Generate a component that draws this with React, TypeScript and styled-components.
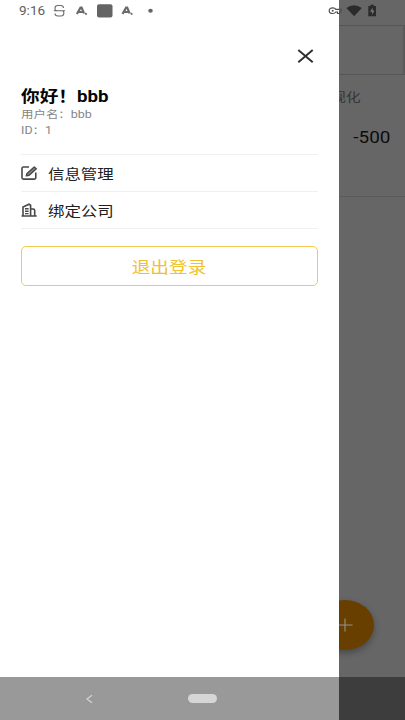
import React from 'react';
import styled, { createGlobalStyle } from 'styled-components';

const Global = createGlobalStyle`
  * { box-sizing: border-box; }
  body { margin: 0; background: #666; overflow: hidden; font-family: Roboto, "Noto Sans CJK SC", sans-serif; }
`;

const Screen = styled.div`
  position: relative;
  width: 405px;
  height: 720px;
  overflow: hidden;
  background: #666;
`;

const Wide = styled.span<{ $origin?: string; $x?: number }>`
  display: inline-block;
  white-space: nowrap;
  transform: scaleX(${p => p.$x ?? 1.165});
  transform-origin: ${p => p.$origin ?? 'left'} center;
`;

/* Dimmed page behind the drawer */
const Page = styled.div`
  display: flex;
  flex-direction: column;
  height: 720px;
  padding-top: 25px;
  background: #666;
`;
const PageBox = styled.div`
  height: 50px;
  border: 1px solid #565656;
  border-right: 2px solid #595959;
`;
const PageCard = styled.div`
  display: flex;
  flex-direction: column;
  align-items: flex-end;
  height: 122px;
  border-bottom: 1px solid #5a5a5a;
`;
const PageTab = styled.div`
  margin: 13px 44px 0 0;
  font-size: 12.5px;
  line-height: 20px;
  color: #343434;
`;
const Amount = styled.div`
  margin: 20px 15px 0 0;
  font-size: 16px;
  line-height: 20px;
  color: #0c0c0c;
`;
const Fab = styled.div`
  position: absolute;
  left: 316px;
  top: 600px;
  width: 58px;
  height: 50px;
  border-radius: 50%;
  background: #693f00;
  box-shadow: 0 3px 7px rgba(0, 0, 0, 0.3);
  display: grid;
  place-items: center;
`;

/* Drawer */
const Drawer = styled.aside`
  position: absolute;
  inset: 0 auto 0 0;
  width: 339px;
  background: #fff;
  padding: 47px 21px 0 20.5px;
  display: flex;
  flex-direction: column;
`;
const CloseRow = styled.div`
  display: flex;
  justify-content: flex-end;
  height: 39px;
  padding-right: 4px;
`;
const Hello = styled.div`
  font-size: 16px;
  font-weight: 700;
  line-height: 22px;
  height: 21px;
  color: #050505;
`;
const Meta = styled.div`
  font-size: 10.7px;
  line-height: 15.5px;
  height: 15.5px;
  color: #858585;
`;
const Menu = styled.div`
  margin-top: 16px;
  border-top: 1px solid #f0f0f0;
`;
const MenuItem = styled.div`
  display: flex;
  align-items: center;
  height: 36.8px;
  border-bottom: 1px solid #f0f0f0;
  font-size: 14.1px;
  color: #202020;
`;
const IconSlot = styled.span`
  display: flex;
  width: 27px;
`;
const Logout = styled.div`
  display: flex;
  align-items: center;
  justify-content: center;
  height: 40px;
  margin-top: 17.4px;
  border: 1.4px solid #f4cb50;
  border-radius: 5px;
  font-size: 16px;
  color: #efc234;
`;

/* System bars */
const StatusBar = styled.div`
  position: absolute;
  inset: 0 0 auto 0;
  height: 22px;
`;
const StatusLeft = styled.div`
  display: flex;
  align-items: center;
  height: 22px;
  padding-left: 19px;
  color: #606060;
  font-size: 12px;
`;
const Clock = styled.span`
  width: 34px;
`;
const StatusIcons = styled.div`
  position: absolute;
  right: 27px;
  top: 4px;
  display: flex;
`;
const NavBar = styled.div`
  position: absolute;
  inset: auto 0 0 0;
  height: 43px;
  background: rgba(0, 0, 0, 0.4);
  display: flex;
  align-items: center;
  padding-left: 85px;
`;
const HomePill = styled.span`
  width: 29px;
  height: 9px;
  margin-left: 94px;
  border-radius: 5px;
  background: #d6d6d6;
`;

export default function App() {
  return (
    <Screen>
      <Global />
      <Page>
        <PageBox />
        <PageCard>
          <PageTab><Wide $origin="right">可视化</Wide></PageTab>
          <Amount><Wide $origin="right" $x={1.18}>-500</Wide></Amount>
        </PageCard>
      </Page>
      <Fab>
        <svg width="16" height="14" viewBox="0 0 16 14" stroke="#929292" strokeWidth="1.1">
          <path d="M0.5 7H15.5M8 .5V13.5" />
        </svg>
      </Fab>

      <Drawer>
        <CloseRow>
          <svg width="17" height="18" viewBox="0 0 17 18" fill="none" stroke="#2e2e2e" strokeWidth="1.9">
            <path d="M1.3 3L15.7 15.2M15.7 3L1.3 15.2" />
          </svg>
        </CloseRow>
        <Hello><Wide>你好！bbb</Wide></Hello>
        <Meta><Wide>用户名：bbb</Wide></Meta>
        <Meta><Wide>ID：1</Wide></Meta>
        <Menu>
          <MenuItem>
            <IconSlot>
              <svg width="17" height="16" viewBox="0 0 17 16" fill="none" stroke="#484848" strokeWidth="1.6" strokeLinejoin="round">
                <path d="M8 2H2.5Q1 2 1 3.3V12.8Q1 14.1 2.5 14.1H13.3Q14.8 14.1 14.8 12.8V7.6" />
                <path d="M5.3 10.8L6 8.4L13.2 2L15.3 3.8L8.2 10.2Z" fill="#888" strokeWidth="1.4" />
              </svg>
            </IconSlot>
            <Wide>信息管理</Wide>
          </MenuItem>
          <MenuItem>
            <IconSlot>
              <svg width="17" height="16" viewBox="0 0 17 16" fill="none" stroke="#484848" strokeWidth="1.6">
                <path d="M.5 14H15.7M2 14V5L8 2.2L9.6 3.2V14M10 7H12.2Q13.7 7 13.7 8.4V14" />
                <path d="M4 6.8H7.6M4 9.2H7.6M4 11.6H7.6" strokeWidth="1.4" />
              </svg>
            </IconSlot>
            <Wide>绑定公司</Wide>
          </MenuItem>
        </Menu>
        <Logout><Wide $origin="center">退出登录</Wide></Logout>
      </Drawer>

      <StatusBar>
        <StatusLeft>
          <Clock><Wide $x={1.13}>9:16</Wide></Clock>
          <svg width="104" height="16" viewBox="53 3 104 16" fill="none" stroke="#6b6b6b">
            <path d="M55 9V8Q55 5.5 58 5.5H60.5Q63.5 5.5 63.5 8M55 9Q55 10.7 57 10.7H62Q63.8 10.7 63.8 12.5V13.5Q63.8 16 61 16H58Q55 16 55 13.5M53.8 10.7H65" strokeWidth="1.1" />
            <path d="M76.9 14L80.5 7.6H81.6L84 13.4M78.7 12H83.5" strokeWidth="2.2" />
            <path d="M85 13.2L86.8 14.5" strokeWidth="1.6" />
            <rect x="97" y="4.3" width="15.5" height="13.2" rx="2" fill="#646464" stroke="none" />
            <path d="M122.5 14L126.1 7.6H127.2L129.6 13.4M124.3 12H129.1" strokeWidth="2.2" />
            <path d="M130.6 13.2L132.4 14.5" strokeWidth="1.6" />
            <ellipse cx="150.5" cy="10.8" rx="2.3" ry="2" fill="#666" stroke="none" />
          </svg>
        </StatusLeft>
        <StatusIcons>
          <svg width="50" height="14" viewBox="328 4 50 14">
            <path d="M335.8 9.4H341.2V12H339.5V13.5H337.5V12H335.8Q335 13.5 332.7 13.5Q329.2 13.5 329.2 10.7Q329.2 7.9 332.7 7.9Q335 7.9 335.8 9.4Z" fill="none" stroke="#4f4f4f" strokeWidth="1.2" />
            <circle cx="332.7" cy="10.7" r="1" fill="#4f4f4f" />
            <path d="M346.4 8Q354 2.5 361.8 8L354.1 16.2Z" fill="#2b2b2b" />
            <path d="M368.3 6H370.4V4.8H373.8V6H376V16.3H368.3Z" fill="#2b2b2b" />
            <path d="M372.6 7.5L370 11.8H372V14.7L374.5 10.5H372.6Z" fill="#777" />
          </svg>
        </StatusIcons>
      </StatusBar>
      <NavBar>
        <svg width="9" height="10" viewBox="0 0 9 10" fill="none" stroke="#d2d2d2" strokeWidth="1.3">
          <path d="M7 1.2L2 5L7 8.8" />
        </svg>
        <HomePill />
      </NavBar>
    </Screen>
  );
}
